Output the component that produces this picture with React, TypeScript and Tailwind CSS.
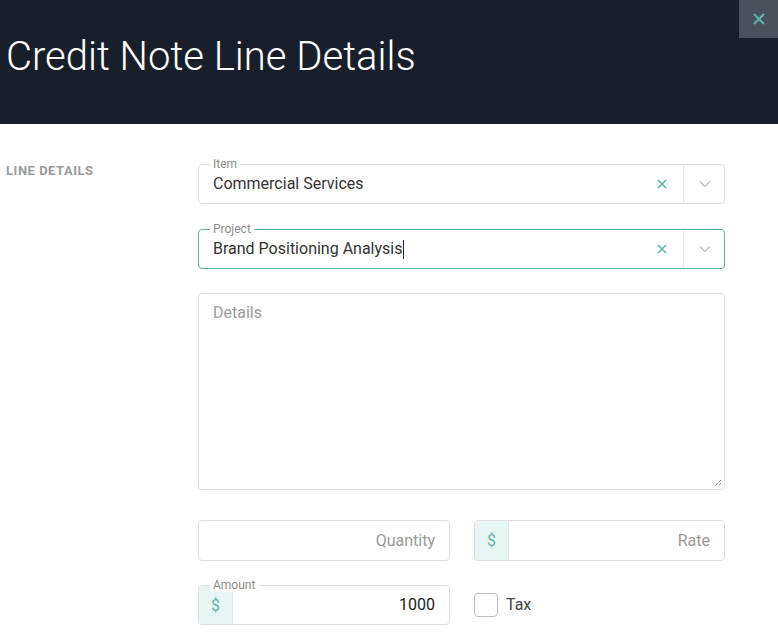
import React from "react";

const Chevron = () => (
  <svg width="14" height="14" viewBox="0 0 14 14" fill="none">
    <path d="M2 4.5 L7 9.5 L12 4.5" stroke="#c4c4c4" strokeWidth="1.5" />
  </svg>
);

const ClearX = () => (
  <svg width="10" height="10" viewBox="0 0 10 10" fill="none">
    <path d="M1 1 L9 9 M9 1 L1 9" stroke="#5bb5a8" strokeWidth="1.6" />
  </svg>
);

function SelectField({ label, value, focused, caret }: { label: string; value: string; focused?: boolean; caret?: boolean }) {
  return (
    <div
      className={`relative flex h-[40px] items-center rounded-[4px] border bg-white ${
        focused ? "border-[#5bb5a8]" : "border-[#dedede]"
      }`}
    >
      <span className="absolute left-[11px] top-[-8px] bg-white px-[3px] text-[12px] leading-[14px] text-[#8a8a8a]">{label}</span>
      <div className="flex flex-1 items-center pl-[14px] text-[16px] text-[#333]">
        {value}
        {caret && <span className="ml-[1px] inline-block h-[19px] w-[1px] bg-[#222]" />}
      </div>
      <div className="flex w-[46px] items-center justify-center pl-[3px]">
        <ClearX />
      </div>
      <div className="h-[38px] w-[1px] bg-[#e6e6e6]" />
      <div className="flex w-[40px] items-center justify-center pl-[1px]">
        <Chevron />
      </div>
    </div>
  );
}

export default function App() {
  return (
    <div className="h-[634px] w-[778px] overflow-hidden bg-white" style={{ fontFamily: "Roboto, 'Liberation Sans', sans-serif" }}>
      <div className="relative h-[124px] bg-[#191f2a]">
        <h1 className="pl-[6px] pt-[31px] text-[40px] font-light leading-[52px] text-white">Credit Note Line Details</h1>
        <div className="absolute right-0 top-0 flex h-[38px] w-[39px] items-center justify-center bg-[#4b505a]">
          <svg width="12" height="12" viewBox="0 0 12 12" fill="none">
            <path d="M1 1 L11 11 M11 1 L1 11" stroke="#5bb5a8" strokeWidth="2" />
          </svg>
        </div>
      </div>
      <div className="flex pt-[40px]">
        <div className="mt-[-1px] w-[198px] pl-[6px] text-[13px] font-bold leading-[16px] tracking-[0.04em] text-[#9a9b9f]">LINE DETAILS</div>
        <div className="flex w-[527px] flex-col">
          <SelectField label="Item" value="Commercial Services" />
          <div className="mt-[25px]">
            <SelectField label="Project" value="Brand Positioning Analysis" focused caret />
          </div>
          <div className="relative mt-[24px] h-[197px] rounded-[4px] border border-[#dedede]">
            <span className="absolute left-[14px] top-[7px] text-[16px] text-[#9a9a9a]">Details</span>
            <svg className="absolute bottom-[2px] right-[2px]" width="8" height="8" viewBox="0 0 8 8">
              <path d="M7 1 L1 7 M7 4 L4 7" stroke="#666" strokeWidth="1" strokeDasharray="1 1" />
            </svg>
          </div>
          <div className="mt-[30px] flex gap-[24px]">
            <div className="flex h-[41px] w-[252px] items-center justify-end rounded-[4px] border border-[#dedede] pr-[14px] text-[16px] text-[#9a9a9a]">
              Quantity
            </div>
            <div className="flex h-[41px] w-[251px] overflow-hidden rounded-[4px] border border-[#dedede]">
              <div className="flex w-[34px] items-center justify-center border-r border-[#d4ecec] bg-[#e8f5f5] text-[16px] text-[#5bb5a8]">$</div>
              <div className="flex flex-1 items-center justify-end pr-[14px] text-[16px] text-[#9a9a9a]">Rate</div>
            </div>
          </div>
          <div className="mt-[24px] flex gap-[24px]">
            <div className="relative flex h-[40px] w-[252px] rounded-[4px] border border-[#dedede]">
              <div className="flex w-[34px] items-center justify-center rounded-l-[4px] border-r border-[#d4ecec] bg-[#e8f5f5] pt-[2px] text-[16px] text-[#5bb5a8]">$</div>
              <div className="flex flex-1 items-center justify-end pr-[14px] text-[16px] text-[#222]">1000</div>
              <span className="absolute left-[11px] top-[-8px] bg-white px-[3px] text-[12px] leading-[14px] text-[#8a8a8a]">Amount</span>
            </div>
            <div className="flex w-[251px] items-center gap-[8px]">
              <div className="h-[24px] w-[24px] rounded-[4px] border border-[#bdbdbd] bg-white" />
              <span className="text-[16px] text-[#444]">Tax</span>
            </div>
          </div>
        </div>
      </div>
    </div>
  );
}
